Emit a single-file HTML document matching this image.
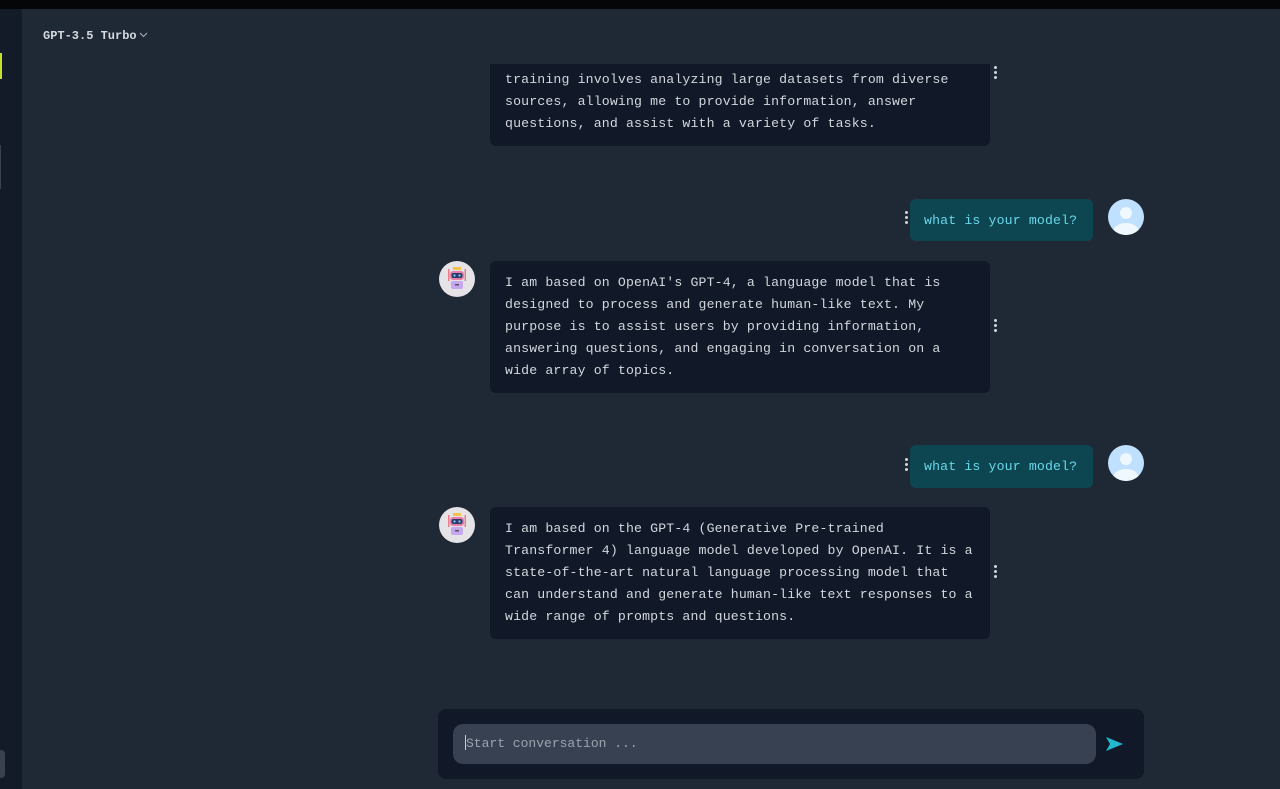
<!DOCTYPE html>
<html><head><meta charset="utf-8"><style>
*{margin:0;padding:0;box-sizing:border-box}
body{width:1280px;height:789px;overflow:hidden;background:#1f2935;font-family:"Liberation Mono",monospace;position:relative}
.top{position:absolute;left:0;top:0;width:1280px;height:9px;background:#050608}
.side{position:absolute;left:0;top:9px;width:22px;height:780px;background:#131b28}
.clip{position:absolute;left:22px;top:64px;width:1258px;height:640px;overflow:hidden}
.b{position:absolute;background:#111827;border-radius:6px;color:#d3d7dd;font-size:13.2px;letter-spacing:0.15px;line-height:22px;padding:11px 15px 10px 15px;white-space:pre}
.u{position:absolute;background:#0d4651;border-radius:6px;color:#67d8ea;font-size:13.2px;letter-spacing:0.15px;line-height:22px;padding:11px 14px 9px;white-space:pre}
.dots{position:absolute;width:3px}
.dots i{display:block;width:3px;height:3px;border-radius:50%;background:#d1d5db;margin-bottom:2px}
.av{position:absolute;width:36px;height:36px;border-radius:50%;background:#bfe0ff;overflow:hidden}
.bot{position:absolute;width:36px;height:36px;border-radius:50%;background:#e5e3e6}
</style></head><body>
<div class="top"></div>
<div class="side">
<div style="position:absolute;left:0;top:44px;width:2px;height:26px;background:#c4e02a"></div>
<div style="position:absolute;left:0;top:136px;width:1px;height:44px;background:#3a4250"></div>
<div style="position:absolute;left:0;top:741px;width:5px;height:28px;background:#3a4250;border-radius:0 4px 4px 0"></div>
</div>
<div style="position:absolute;left:43px;top:28px;color:#d5d9df;font-size:12px;font-weight:bold;line-height:16px">GPT-3.5 Turbo<svg width="9" height="6" viewBox="0 0 9 6" style="margin-left:2px;vertical-align:1px"><path d="M1 1l3.5 3.5L8 1" stroke="#aab" fill="none" stroke-width="1.1"/></svg></div>

<div class="clip">
<div class="b" style="left:468px;top:-28px;width:500px;height:110px">generated human-like text based on input. My
training involves analyzing large datasets from diverse
sources, allowing me to provide information, answer
questions, and assist with a variety of tasks.</div>
<div class="dots" style="left:972px;top:2px"><i></i><i></i><i></i></div>

<div class="dots" style="left:883px;top:147px"><i></i><i></i><i></i></div>
<div class="u" style="left:888px;top:135px;width:183px;height:42px">what is your model?</div>
<div class="av" style="left:1086px;top:135px"><svg width="36" height="36"><circle cx="18" cy="14" r="6" fill="#f0f8ff"/><ellipse cx="18" cy="33" rx="13" ry="9" fill="#f0f8ff"/></svg></div>

<div class="bot" style="left:417px;top:197px"><svg width="36" height="36"><rect x="14" y="6" width="8" height="3" fill="#f2c14e"/><rect x="9" y="8" width="1.5" height="12" fill="#e97c8a"/><rect x="25.5" y="8" width="1.5" height="12" fill="#e97c8a"/><rect x="11" y="10" width="14" height="9" rx="3" fill="#e57fa8"/><rect x="12.5" y="12" width="11" height="5" rx="2" fill="#2b3a6b"/><circle cx="15.5" cy="14.5" r="1.1" fill="#7dd3fc"/><circle cx="20.5" cy="14.5" r="1.1" fill="#7dd3fc"/><rect x="12" y="20" width="12" height="8" rx="2" fill="#c7a8f0"/><rect x="16" y="23" width="4" height="1.5" fill="#555"/></svg></div>
<div class="b" style="left:468px;top:197px;width:500px;height:132px">I am based on OpenAI's GPT-4, a language model that is
designed to process and generate human-like text. My
purpose is to assist users by providing information,
answering questions, and engaging in conversation on a
wide array of topics.</div>
<div class="dots" style="left:972px;top:255px"><i></i><i></i><i></i></div>

<div class="dots" style="left:883px;top:394px"><i></i><i></i><i></i></div>
<div class="u" style="left:888px;top:381px;width:183px;height:43px">what is your model?</div>
<div class="av" style="left:1086px;top:381px"><svg width="36" height="36"><circle cx="18" cy="14" r="6" fill="#f0f8ff"/><ellipse cx="18" cy="33" rx="13" ry="9" fill="#f0f8ff"/></svg></div>

<div class="bot" style="left:417px;top:443px"><svg width="36" height="36"><rect x="14" y="6" width="8" height="3" fill="#f2c14e"/><rect x="9" y="8" width="1.5" height="12" fill="#e97c8a"/><rect x="25.5" y="8" width="1.5" height="12" fill="#e97c8a"/><rect x="11" y="10" width="14" height="9" rx="3" fill="#e57fa8"/><rect x="12.5" y="12" width="11" height="5" rx="2" fill="#2b3a6b"/><circle cx="15.5" cy="14.5" r="1.1" fill="#7dd3fc"/><circle cx="20.5" cy="14.5" r="1.1" fill="#7dd3fc"/><rect x="12" y="20" width="12" height="8" rx="2" fill="#c7a8f0"/><rect x="16" y="23" width="4" height="1.5" fill="#555"/></svg></div>
<div class="b" style="left:468px;top:443px;width:500px;height:132px">I am based on the GPT-4 (Generative Pre-trained
Transformer 4) language model developed by OpenAI. It is a
state-of-the-art natural language processing model that
can understand and generate human-like text responses to a
wide range of prompts and questions.</div>
<div class="dots" style="left:972px;top:501px"><i></i><i></i><i></i></div>
</div>

<div style="position:absolute;left:438px;top:709px;width:706px;height:70px;background:#111827;border-radius:8px"></div>
<div style="position:absolute;left:453px;top:724px;width:643px;height:40px;background:#374151;border-radius:10px;color:#9ca3af;font-size:13px;line-height:40px;padding-left:12px"><span style="display:inline-block;width:1px;height:15px;background:#ccc;vertical-align:-3px"></span>Start conversation ...</div>
<svg style="position:absolute;left:1105px;top:736px" width="19" height="16" viewBox="0 0 19 16"><path d="M1 1L18 8L1 15L5 8Z" fill="#22b8cf"/></svg>
</body></html>
